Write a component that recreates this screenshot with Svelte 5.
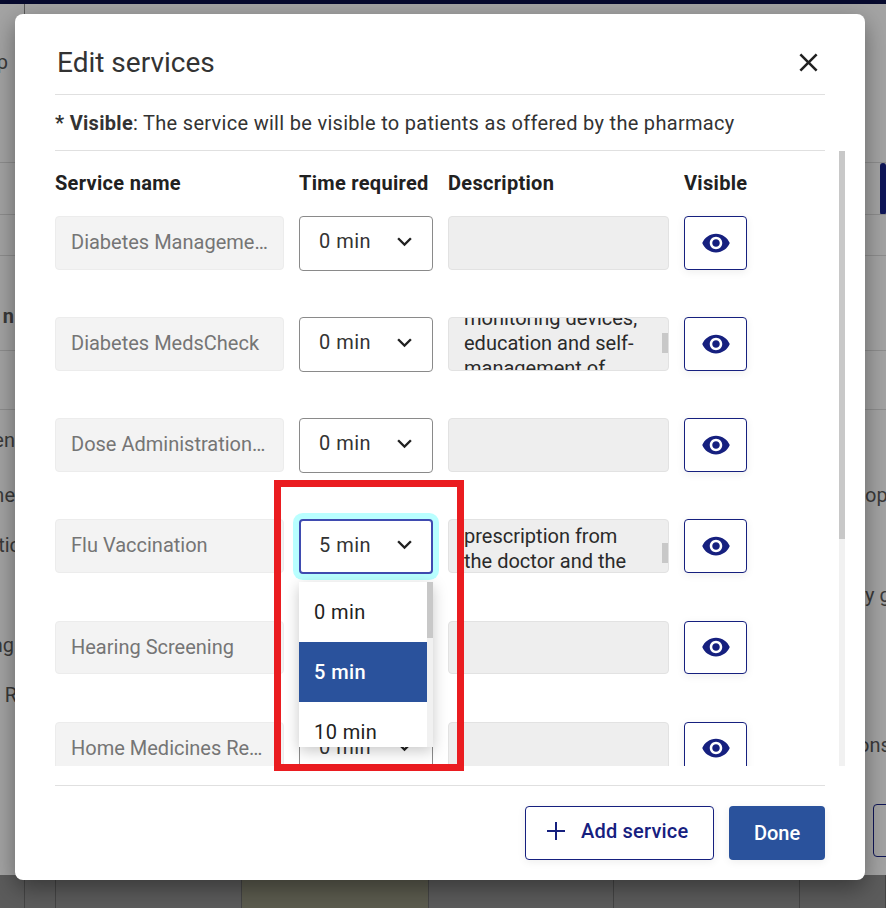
<script>
  const behind = [
    { h: 78, left: 'p', lw: 8, right: '', top: true },
    { h: 71, left: '', lw: 0, right: '', line: true },
    { h: 52, left: '', lw: 0, right: '', line: true, btn: true },
    { h: 41, left: '', lw: 0, right: '', line: true },
    { h: 95, left: 'n', lw: 14, right: '', line: true, bold: true, low: true },
    { h: 59, left: '', lw: 0, right: '', line: true },
    { h: 60, left: 'en', lw: 15, right: '' },
    { h: 50, left: 'ne', lw: 15, right: 'op' },
    { h: 50, left: 'tic', lw: 20, right: '' },
    { h: 50, left: '', lw: 0, right: 'y g' },
    { h: 50, left: 'ng', lw: 14, right: '' },
    { h: 50, left: 'R', lw: 17, right: '' },
    { h: 50, left: '', lw: 0, right: 'ons', rx: -7 },
    { h: 105, left: '', lw: 0, right: '', outline: true }
  ];

  const cells = [25, 31, 186, 187, 185, 186, 86];

  const services = [
    { name: 'Diabetes Management Program', time: '0 min', desc: '' },
    {
      name: 'Diabetes MedsCheck',
      time: '0 min',
      desc: 'Review of your monitoring devices, education and self-management of your diabetes with the pharmacist',
      scroll: 37,
      thumb: 16
    },
    { name: 'Dose Administration Aids', time: '0 min', desc: '' },
    {
      name: 'Flu Vaccination',
      time: '5 min',
      desc: 'Flu shot without a prescription from the doctor and the vaccine is given at the pharmacy',
      scroll: 21,
      thumb: 24,
      open: true
    },
    { name: 'Hearing Screening', time: '0 min', desc: '' },
    { name: 'Home Medicines Review', time: '0 min', desc: '' },
    { name: 'Medication Review', time: '0 min', desc: '' },
    { name: 'Pain Management', time: '0 min', desc: '' },
    { name: 'Smoking Cessation', time: '0 min', desc: '' }
  ];

  const times = ['0 min', '5 min', '10 min', '15 min', '20 min', '30 min', '45 min', '60 min'];

  function scrolled(node, top) {
    node.scrollTop = top || 0;
  }
</script>

<div class="page">
  <div class="topbar"></div>
  <div class="top-strip"></div>
  {#each behind as row}
    <div class="bg-row" class:line={row.line} class:bold={row.bold} class:low={row.low} class:top={row.top} style="height: {row.h}px">
      <div class="bg-left" style="width: {row.lw}px">{row.left}</div>
      <div class="bg-right">
        <span style="margin-left: {row.rx || 0}px">{row.right}</span>
        {#if row.btn}<span class="bg-btn"></span>{/if}
        {#if row.outline}<span class="bg-outline"></span>{/if}
      </div>
    </div>
  {/each}
  <div class="bg-cells">
    {#each cells as w, i}
      <div class="bg-cell" class:olive={i === 3} style="width: {w}px"></div>
    {/each}
  </div>

  <div class="modal">
    <div class="title-row">
      <h2>Edit services</h2>
      <button class="close" aria-label="Close">
        <svg viewBox="0 0 24 24" width="31" height="31"><path d="M19 6.41L17.59 5 12 10.59 6.41 5 5 6.41 10.59 12 5 17.59 6.41 19 12 13.41 17.59 19 19 17.59 13.41 12z" /></svg>
      </button>
    </div>
    <p class="notice"><b>*</b> <b>Visible</b>: The service will be visible to patients as offered by the pharmacy</p>

    <div class="list-wrap">
      <div class="list">
        <div class="row head">
          <div>Service name</div>
          <div>Time required</div>
          <div>Description</div>
          <div>Visible</div>
        </div>
        {#each services as s}
          <div class="row">
            <div class="name">{s.name}</div>
            <div class="select-wrap">
              <button class="select" class:focused={s.open}>
                <span>{s.time}</span>
                <svg viewBox="0 0 24 24" width="29" height="29"><path d="M7.41 8.59L12 13.17l4.59-4.58L18 10l-6 6-6-6z" /></svg>
              </button>
              {#if s.open}
                <div class="menu">
                  <ul>
                    {#each times as t}
                      <li class:active={t === s.time}>{t}</li>
                    {/each}
                  </ul>
                  <div class="track"><div class="thumb menu-thumb"></div></div>
                </div>
              {/if}
            </div>
            <div class="desc-wrap">
              <div class="desc" use:scrolled={s.scroll}>{s.desc}</div>
              {#if s.desc}<div class="desc-thumb" style="top: {s.thumb}px"></div>{/if}
            </div>
            <button class="eye" aria-label="Toggle visible">
              <svg viewBox="0 0 24 24" width="30" height="30"><path d="M12 4.5C7 4.5 2.73 7.61 1 12c1.73 4.39 6 7.5 11 7.5s9.27-3.11 11-7.5c-1.73-4.39-6-7.5-11-7.5zM12 17c-2.76 0-5-2.24-5-5s2.24-5 5-5 5 2.24 5 5-2.24 5-5 5zm0-8c-1.66 0-3 1.34-3 3s1.34 3 3 3 3-1.34 3-3-1.34-3-3-3z" /></svg>
            </button>
          </div>
        {/each}
      </div>
      <div class="track"><div class="thumb list-thumb"></div></div>
    </div>

    <div class="footer">
      <button class="add">
        <svg viewBox="0 0 18 18" width="18" height="18"><path d="M8 0h2v8h8v2h-8v8H8v-8H0V8h8z" /></svg>
        Add service
      </button>
      <button class="done">Done</button>
    </div>
  </div>

  <div class="callout"></div>
</div>

<style>
  :global(body) {
    margin: 0;
    font-family: Roboto, "Liberation Sans", sans-serif;
    overflow: hidden;
  }

  .page {
    position: relative;
    width: 886px;
    height: 908px;
    background: #a4a4a4;
    color: #3a3a3a;
    font-size: 20px;
    overflow: hidden;
  }

  .topbar {
    height: 4px;
    background: #070a2e;
  }

  .top-strip {
    width: 24px;
    height: 10px;
    border-right: 1px solid #5a5a5a;
  }

  .bg-row {
    display: flex;
    justify-content: space-between;
    align-items: center;
    box-sizing: border-box;
    overflow: hidden;
  }

  .bg-row.line {
    border-bottom: 1px solid #8e8e8e;
  }

  .bg-row.bold {
    font-weight: 700;
  }

  .bg-row.low {
    align-items: flex-end;
    padding-bottom: 22px;
  }

  .bg-row.top {
    align-items: flex-start;
    padding-top: 36px;
  }

  .bg-left {
    display: flex;
    justify-content: flex-end;
    white-space: nowrap;
    overflow: hidden;
  }

  .bg-right {
    display: flex;
    justify-content: flex-start;
    align-items: center;
    width: 21px;
    white-space: nowrap;
    overflow: hidden;
  }

  .bg-btn {
    display: block;
    width: 15px;
    height: 52px;
    margin-left: 15px;
    border-radius: 4px;
    background: #0f1658;
  }

  .bg-outline {
    display: block;
    flex: none;
    width: 40px;
    height: 53px;
    margin: 15px 0 0 8px;
    box-sizing: border-box;
    border: 1px solid #0f1658;
    border-radius: 4px;
  }

  .bg-cells {
    display: flex;
    height: 40px;
  }

  .bg-cell {
    flex: none;
    height: 100%;
    box-sizing: border-box;
    background: #5c5c5c;
    border-right: 1px solid #454545;
  }

  .bg-cell.olive {
    background: #5c5c4f;
  }

  .modal {
    position: absolute;
    left: 15px;
    top: 14px;
    width: 850px;
    height: 866px;
    box-sizing: border-box;
    display: flex;
    flex-direction: column;
    padding: 0 40px;
    background: #fff;
    border-radius: 8px;
    color: #212121;
    box-shadow: 0 8px 24px rgba(0, 0, 0, 0.4);
  }

  .title-row {
    display: flex;
    justify-content: space-between;
    align-items: center;
    flex: none;
    height: 81px;
    box-sizing: border-box;
    padding: 16px 1px 0 2px;
    border-bottom: 1px solid #e0e0e0;
  }

  h2 {
    margin: 0;
    font-size: 28px;
    font-weight: 400;
    color: #333;
  }

  .close {
    display: flex;
    padding: 0;
    border: 0;
    background: none;
    fill: #212121;
  }

  .notice {
    flex: none;
    margin: 0;
    height: 56px;
    box-sizing: border-box;
    border-bottom: 1px solid #e0e0e0;
    line-height: 56px;
    font-size: 20px;
    letter-spacing: 0.3px;
    color: #333;
  }

  .list-wrap {
    position: relative;
    flex: none;
    height: 615px;
    width: 790px;
  }

  .list {
    height: 100%;
    overflow: hidden;
  }

  .track {
    position: absolute;
    top: 0;
    right: 0;
    bottom: 0;
    width: 6px;
    background: #f1f1f1;
  }

  .thumb {
    background: #c8c8c8;
  }

  .list-thumb {
    height: 388px;
  }

  .menu-thumb {
    height: 56px;
  }

  .row {
    display: grid;
    grid-template-columns: 229px 134px 221px 63px;
    gap: 15px;
    height: 101.15px;
    align-items: start;
  }

  .row.head {
    height: 65px;
    box-sizing: border-box;
    padding-bottom: 2px;
    align-items: center;
    font-size: 20px;
    font-weight: 700;
    letter-spacing: 0.3px;
    color: #212121;
  }

  .name,
  .desc {
    height: 53.5px;
    box-sizing: border-box;
    border-radius: 4px;
    font-size: 20px;
  }

  .name {
    padding: 0 14px 0 15px;
    line-height: 51px;
    background: #f3f3f3;
    border: 1px solid #ececec;
    color: #757575;
    white-space: nowrap;
    overflow: hidden;
    text-overflow: ellipsis;
  }

  .select-wrap {
    position: relative;
  }

  .select {
    display: flex;
    justify-content: space-between;
    align-items: center;
    width: 134px;
    height: 55px;
    box-sizing: border-box;
    padding: 0 13px 5px 19px;
    background: #fff;
    border: 1px solid #8a8a8a;
    border-radius: 4px;
    font: inherit;
    font-size: 20px;
    letter-spacing: 0.5px;
    color: #333;
  }

  .select svg {
    fill: #212121;
  }

  .select.focused {
    border: 2px solid #3f4bb0;
    padding: 0 12px 4px 18px;
    box-shadow: 0 0 0 6px #b9ffff;
  }

  .menu {
    position: absolute;
    z-index: 2;
    top: 63px;
    left: 0;
    width: 134px;
    height: 165px;
    background: #fff;
    box-shadow: 0 4px 14px rgba(0, 0, 0, 0.22);
    overflow: hidden;
  }

  .menu ul {
    width: 128px;
    margin: 0;
    padding: 0;
    list-style: none;
  }

  .menu li {
    height: 60px;
    padding-left: 15px;
    line-height: 60px;
    font-size: 20px;
    letter-spacing: 0.4px;
    color: #212121;
  }

  .menu li.active {
    background: #2a529c;
    color: #fff;
    font-weight: 500;
  }

  .desc-wrap {
    position: relative;
  }

  .desc {
    padding: 0 21px 0 15px;
    line-height: 25px;
    background: #eee;
    border: 1px solid #e2e2e2;
    color: #2a2a2a;
    overflow: hidden;
  }

  .desc-thumb {
    position: absolute;
    right: 1px;
    width: 6px;
    height: 20px;
    background: #c8c8c8;
  }

  .eye {
    display: flex;
    justify-content: center;
    align-items: center;
    height: 53.5px;
    padding: 0;
    background: #fff;
    border: 1px solid #16207f;
    border-radius: 4px;
    box-shadow: 0 2px 8px rgba(0, 0, 0, 0.07);
    fill: #16207f;
  }

  .footer {
    flex: none;
    display: flex;
    justify-content: flex-end;
    gap: 15px;
    margin-top: 19px;
    padding-top: 20px;
    border-top: 1px solid #e0e0e0;
  }

  .add,
  .done {
    height: 54px;
    border-radius: 4px;
    font: inherit;
    font-size: 20px;
    font-weight: 500;
    box-shadow: 0 2px 8px rgba(0, 0, 0, 0.07);
  }

  .add {
    display: flex;
    align-items: center;
    gap: 16px;
    width: 189px;
    box-sizing: border-box;
    padding: 0 0 5px 21px;
    background: #fff;
    border: 1px solid #16207f;
    color: #16207f;
    fill: #16207f;
    letter-spacing: 0.2px;
  }

  .done {
    width: 96px;
    padding: 0;
    background: #2a529c;
    border: 0;
    color: #fff;
  }

  .callout {
    position: absolute;
    left: 274px;
    top: 480px;
    width: 190px;
    height: 291px;
    box-sizing: border-box;
    border: 7px solid #ea1c20;
    pointer-events: none;
  }
</style>
